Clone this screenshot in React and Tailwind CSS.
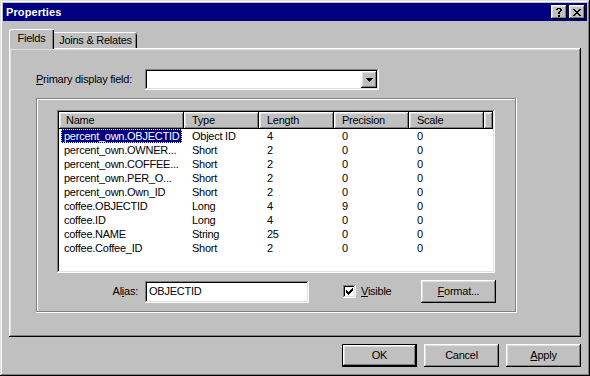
import React from "react";

const raised =
  "shadow-[inset_-1px_-1px_#000,inset_1px_1px_#fff,inset_-2px_-2px_#808080,inset_2px_2px_#dfdfdf]";
const sunken =
  "shadow-[inset_-1px_-1px_#fff,inset_1px_1px_#808080,inset_-2px_-2px_#dfdfdf,inset_2px_2px_#000]";

const rows = [
  ["percent_own.OBJECTID", "Object ID", "4", "0", "0"],
  ["percent_own.OWNER...", "Short", "2", "0", "0"],
  ["percent_own.COFFEE...", "Short", "2", "0", "0"],
  ["percent_own.PER_O...", "Short", "2", "0", "0"],
  ["percent_own.Own_ID", "Short", "2", "0", "0"],
  ["coffee.OBJECTID", "Long", "4", "9", "0"],
  ["coffee.ID", "Long", "4", "0", "0"],
  ["coffee.NAME", "String", "25", "0", "0"],
  ["coffee.Coffee_ID", "Short", "2", "0", "0"],
];

const cols = [
  { label: "Name", w: "w-[125px]" },
  { label: "Type", w: "w-[75px]" },
  { label: "Length", w: "w-[75px]" },
  { label: "Precision", w: "w-[75px]" },
  { label: "Scale", w: "w-[75px]" },
];

function Button({ children, isDefault }) {
  return (
    <div
      className={
        "w-[75px] h-[23px] flex items-center justify-center bg-[#c0c0c0] " +
        (isDefault ? "border border-black " : "") +
        raised
      }
    >
      {children}
    </div>
  );
}

function TitleButton({ children }) {
  return (
    <div className={"w-[16px] h-[14px] bg-[#c0c0c0] flex items-center justify-center " + raised}>
      {children}
    </div>
  );
}

export default function App() {
  return (
    <div className="w-[590px] h-[376px] bg-[#c0c0c0] font-['Liberation_Sans',Arial,sans-serif] text-[11px] tracking-[-0.25px] leading-[13px] text-black p-[3px] flex flex-col shadow-[inset_-1px_-1px_#000,inset_1px_1px_#dfdfdf,inset_-2px_-2px_#808080,inset_2px_2px_#fff]">
      {/* title bar */}
      <div className="h-[18px] bg-[#000080] flex items-center justify-between pl-[3px] pr-[2px]">
        <span className="text-white font-bold text-[11px] tracking-[0.1px]">Properties</span>
        <div className="flex gap-[2px]">
          <TitleButton>
            <svg width="6" height="9" viewBox="0 0 6 9" shapeRendering="crispEdges">
              <path
                d="M1 0h4v1h-4zM0 1h2v1h-2zM4 1h2v2h-2zM3 3h2v1h-2zM2 4h2v2h-2zM2 7h2v2h-2z"
                fill="#000"
              />
            </svg>
          </TitleButton>
          <TitleButton>
            <svg width="8" height="7" viewBox="0 0 8 7" shapeRendering="crispEdges">
              <path
                d="M0 0h2v1h-2zM6 0h2v1h-2zM1 1h2v1h-2zM5 1h2v1h-2zM2 2h4v1h-4zM3 3h2v1h-2zM2 4h4v1h-4zM1 5h2v1h-2zM5 5h2v1h-2zM0 6h2v1h-2zM6 6h2v1h-2z"
                fill="#000"
              />
            </svg>
          </TitleButton>
        </div>
      </div>

      {/* tabs */}
      <div className="mt-[8px] ml-[6px] h-[19px] flex items-end">
        <div className="relative z-10 -mb-px w-[45px] h-[20px] bg-[#c0c0c0] flex items-center justify-center pb-[1px] rounded-tl-[2px] shadow-[inset_1px_1px_#fff,inset_-1px_0_#000,inset_-2px_0_#808080]">
          Fields
        </div>
        <div className="w-[83px] h-[16px] bg-[#c0c0c0] flex items-center justify-center rounded-tr-[2px] shadow-[inset_0_1px_#fff,inset_-1px_0_#000,inset_-2px_0_#808080]">
          Joins &amp; Relates
        </div>
      </div>

      {/* tab panel */}
      <div className={"mx-[6px] h-[289px] pt-[21px] pl-[27px] " + raised}>
        <div className="flex items-center">
          <div className="w-[109px]">
            <u>P</u>rimary display field:
          </div>
          <div className={"w-[234px] h-[21px] bg-white flex justify-end items-center pr-[2px] " + sunken}>
            <div className={"w-[16px] h-[17px] bg-[#c0c0c0] flex items-center justify-center " + raised}>
              <svg width="7" height="4" viewBox="0 0 7 4" shapeRendering="crispEdges">
                <path d="M0 0h7v1h-7zM1 1h5v1h-5zM2 2h3v1h-3zM3 3h1v1h-1z" fill="#000" />
              </svg>
            </div>
          </div>
        </div>

        {/* group box */}
        <div className="mt-[8px] w-[481px] h-[215px] pt-[12px] pl-[21px] shadow-[inset_-1px_-1px_#fff,inset_1px_1px_#808080,inset_-2px_-2px_#808080,inset_2px_2px_#fff]">
          <div className={"w-[438px] h-[163px] bg-white p-[2px] " + sunken}>
            <div className="flex h-[17px]">
              {cols.map((c, i) => (
                <div
                  key={c.label}
                  className={c.w + " h-full bg-[#c0c0c0] flex items-center " + (i === 0 ? "pl-[7px] " : "pl-[8px] ") + raised}
                >
                  {c.label}
                </div>
              ))}
              <div className={"flex-1 h-full bg-[#c0c0c0] " + raised}></div>
            </div>
            {rows.map((r, ri) => (
              <div key={ri} className="flex h-[14px] items-center">
                <div className="w-[125px] pl-[2px]">
                  {ri === 0 ? (
                    <span className="inline-block bg-[#000080] text-white px-[2px] border border-dotted border-[#ffff80] leading-[12px]">
                      {r[0]}
                    </span>
                  ) : (
                    <span className="inline-block px-[3px]">{r[0]}</span>
                  )}
                </div>
                <div className="w-[75px] pl-[8px]">{r[1]}</div>
                <div className="w-[75px] pl-[8px]">{r[2]}</div>
                <div className="w-[75px] pl-[8px]">{r[3]}</div>
                <div className="w-[75px] pl-[8px]">{r[4]}</div>
              </div>
            ))}
          </div>

          {/* alias row */}
          <div className="mt-[7px] flex items-center">
            <div className="w-[82px] text-right pr-[1px]">
              Al<u>i</u>as:
            </div>
            <div className={"ml-[6px] w-[164px] h-[22px] bg-white flex items-center pl-[4px] " + sunken}>
              OBJECTID
            </div>
            <div className={"ml-[34px] w-[13px] h-[13px] bg-white flex items-center justify-center " + sunken}>
              <svg width="7" height="7" viewBox="0 0 7 7" shapeRendering="crispEdges">
                <path
                  d="M6 0h1v1h-1zM5 1h2v1h-2zM0 2h1v1h-1zM4 2h3v1h-3zM0 3h2v1h-2zM3 3h3v1h-3zM0 4h5v1h-5zM1 5h3v1h-3zM2 6h1v1h-1z"
                  fill="#000"
                />
              </svg>
            </div>
            <div className="ml-[5px] w-[60px]">
              <u>V</u>isible
            </div>
            <Button>
              <span>
                <u>F</u>ormat...
              </span>
            </Button>
          </div>
        </div>
      </div>

      {/* dialog buttons */}
      <div className="mt-[7px] mr-[6px] flex justify-end gap-[7px]">
        <Button isDefault>OK</Button>
        <Button>Cancel</Button>
        <Button>
          <span>
            <u>A</u>pply
          </span>
        </Button>
      </div>
    </div>
  );
}
